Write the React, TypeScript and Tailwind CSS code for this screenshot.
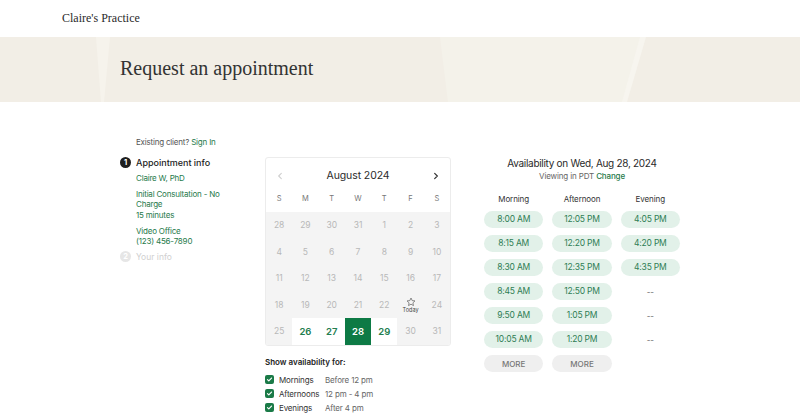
import React from 'react';

const sans = { fontFamily: 'Inter, "Noto Sans", sans-serif' };
const serif = { fontFamily: '"Liberation Serif", "DejaVu Serif", serif' };

const weeks: number[][] = [
  [28, 29, 30, 31, 1, 2, 3],
  [4, 5, 6, 7, 8, 9, 10],
  [11, 12, 13, 14, 15, 16, 17],
  [18, 19, 20, 21, 22, 23, 24],
  [25, 26, 27, 28, 29, 30, 31],
];

const available = [26, 27, 28, 29];

const morning = ['8:00 AM', '8:15 AM', '8:30 AM', '8:45 AM', '9:50 AM', '10:05 AM'];
const afternoon = ['12:05 PM', '12:20 PM', '12:35 PM', '12:50 PM', '1:05 PM', '1:20 PM'];
const evening = ['4:05 PM', '4:20 PM', '4:35 PM'];

const Star = () => (
  <svg width="10" height="10" viewBox="0 0 24 24" fill="none" stroke="#555" strokeWidth="1.6" strokeLinejoin="round">
    <path d="M12 2.5l2.9 6.1 6.6.8-4.9 4.6 1.3 6.6L12 17.3l-5.9 3.3 1.3-6.6-4.9-4.6 6.6-.8z" />
  </svg>
);

const Check = () => (
  <span className="w-[9px] h-[9px] rounded-[2px] bg-[#1a7a47] flex items-center justify-center">
    <svg width="7" height="7" viewBox="0 0 12 12" fill="none" stroke="white" strokeWidth="2" strokeLinecap="round" strokeLinejoin="round">
      <path d="M2.5 6.2l2.3 2.3 4.7-5" />
    </svg>
  </span>
);

const Calendar = () => (
  <div className="w-[186px] border border-[#ececec] rounded-[3px] overflow-hidden">
    <div className="h-[35px] flex items-center justify-between px-[10px]">
      <svg width="8" height="8" viewBox="0 0 12 12" fill="none" stroke="#cfcfcf" strokeWidth="1.6" strokeLinecap="round" strokeLinejoin="round">
        <path d="M8 2L4 6l4 4" />
      </svg>
      <span className="text-[10.5px] text-[#2b2b2b] tracking-[-0.1px]">August 2024</span>
      <svg width="8" height="8" viewBox="0 0 12 12" fill="none" stroke="#333" strokeWidth="1.8" strokeLinecap="round" strokeLinejoin="round">
        <path d="M4 2l4 4-4 4" />
      </svg>
    </div>
    <div className="grid grid-cols-7 h-[19px] items-start">
      {['S', 'M', 'T', 'W', 'T', 'F', 'S'].map((d, i) => (
        <span key={i} className="text-center text-[7.5px] text-[#777]">{d}</span>
      ))}
    </div>
    <div className="bg-[#f4f4f4] grid grid-cols-7">
      {weeks.map((w, r) =>
        w.map((d, c) => {
          const avail = r === 4 && available.includes(d);
          const selected = avail && d === 28;
          const today = r === 3 && d === 23;
          let cls = 'h-[26.6px] flex flex-col items-center justify-center text-[8.5px] text-[#b8b8b8]';
          if (avail) cls = 'h-[26.6px] flex items-center justify-center text-[9.5px] font-semibold bg-white text-[#237d4f]';
          if (selected) cls = 'h-[26.6px] flex items-center justify-center text-[9.5px] font-semibold bg-[#0d7a45] text-white';
          return (
            <div key={`${r}-${c}`} className={cls}>
              {today ? (
                <>
                  <Star />
                  <span className="text-[5.5px] text-[#444] mt-[1px] leading-none">Today</span>
                </>
              ) : (
                d
              )}
            </div>
          );
        })
      )}
    </div>
  </div>
);

const Slot = ({ t }: { t: string }) => (
  <div className="h-[17px] rounded-full bg-[#e2f1e9] text-[#2e7d54] text-[8.5px] tracking-[-0.2px] flex items-center justify-center">{t}</div>
);

const More = () => (
  <div className="h-[17px] rounded-full bg-[#efefef] text-[#777] text-[8px] font-medium flex items-center justify-center">MORE</div>
);

const Dash = () => <div className="h-[17px] flex items-center justify-center text-[8px] text-[#666]">--</div>;

export default function App() {
  return (
    <div className="w-[800px] h-[420px] bg-white overflow-hidden relative" style={sans}>
      <div className="h-[37px] flex items-center pl-[62px] pb-[2px]">
        <span className="text-[12px] text-[#2a2a2a]" style={serif}>Claire's Practice</span>
      </div>
      <div className="h-[65px] bg-[#f2eee6] relative flex items-center pl-[120px] pb-[3px] overflow-hidden">
        <svg className="absolute inset-0" width="800" height="65" viewBox="0 0 800 65">
          <polygon points="96,0 110,0 104,65 101,65" fill="#f6f3ec" />
          <polygon points="440,0 645,0 625,65 448,65" fill="#f4f2ea" />
          <polygon points="640,0 646,0 627,65 622,65" fill="#f7f5ef" />
        </svg>
        <h1 className="relative text-[20px] text-[#333]" style={serif}>Request an appointment</h1>
      </div>

      <div className="flex pl-[120px] pt-[34px]">
        <div className="w-[145px]">
          <div className="pl-[16px] text-[8px] tracking-[-0.2px] text-[#555] leading-[12px]">
            Existing client? <span className="text-[#1f7a4b]">Sign In</span>
          </div>
          <div className="flex items-center gap-[5px] mt-[8px]">
            <span className="w-[11px] h-[11px] rounded-full bg-[#1e1e1e] text-white text-[7.5px] font-bold flex items-center justify-center">1</span>
            <span className="text-[9px] font-medium text-[#222]">Appointment info</span>
          </div>
          <div className="pl-[16px] w-[112px] text-[8px] tracking-[-0.2px] text-[#1f7a4b] leading-[10.5px]">
            <div className="mt-[3px]">Claire W, PhD</div>
            <div className="mt-[5.5px]">Initial Consultation - No Charge</div>
            <div>15 minutes</div>
            <div className="mt-[5.5px]">Video Office</div>
            <div>(123) 456-7890</div>
          </div>
          <div className="flex items-center gap-[5px] mt-[4px]">
            <span className="w-[11px] h-[11px] rounded-full bg-[#e6e6e6] text-white text-[7.5px] font-bold flex items-center justify-center">2</span>
            <span className="text-[8.5px] text-[#d0d0d0]">Your info</span>
          </div>
        </div>

        <div className="pt-[21px]">
          <Calendar />
          <div className="mt-[10px] text-[8px] font-semibold text-[#222] leading-[12px]">Show availability for:</div>
          <div className="mt-[7px] flex flex-col gap-[4px] text-[8px] tracking-[-0.15px]">
            {[
              ['Mornings', 'Before 12 pm'],
              ['Afternoons', '12 pm - 4 pm'],
              ['Evenings', 'After 4 pm'],
            ].map(([a, b]) => (
              <div key={a} className="flex items-center h-[10px]">
                <Check />
                <span className="ml-[5px] w-[46px] text-[#333]">{a}</span>
                <span className="text-[#666]">{b}</span>
              </div>
            ))}
          </div>
        </div>

        <div className="ml-[33px] w-[196px] pt-[20px]">
          <div className="text-center text-[10px] tracking-[-0.3px] text-[#2a2a2a] leading-[14px]">Availability on Wed, Aug 28, 2024</div>
          <div className="text-center text-[8px] tracking-[-0.15px] text-[#666] leading-[12px]">
            Viewing in PDT <span className="text-[#1f7a4b] font-medium">Change</span>
          </div>
          <div className="grid grid-cols-3 gap-x-[9px] mt-[12px]">
            {[
              ['Morning', morning, true],
              ['Afternoon', afternoon, true],
              ['Evening', evening, false],
            ].map(([label, slots, more]) => (
              <div key={label as string} className="flex flex-col gap-[7px]">
                <div className="text-center text-[8px] tracking-[-0.1px] text-[#333] h-[10px] leading-[10px]">{label as string}</div>
                {(slots as string[]).map((s) => (
                  <Slot key={s} t={s} />
                ))}
                {more ? <More /> : [0, 1, 2].map((i) => <Dash key={i} />)}
              </div>
            ))}
          </div>
        </div>
      </div>
    </div>
  );
}
